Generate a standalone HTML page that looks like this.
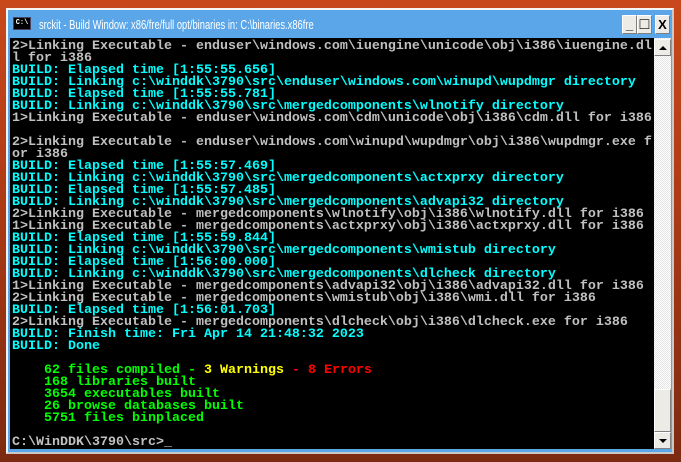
<!DOCTYPE html>
<html><head><style>
html,body{margin:0;padding:0;width:681px;height:462px;overflow:hidden;}
body{background:linear-gradient(180deg,#c8481c 0%,#b03c16 40%,#7c2a12 100%);position:relative;}
.frame{position:absolute;left:6px;top:8px;width:668px;height:446px;background:#5aa6e8;border:2px solid #f4f4f4;box-sizing:border-box;border-bottom-color:#c8c8c8;border-right-color:#c8c8c8;}
.title{position:absolute;left:10px;top:11px;width:662px;height:26px;background:#5aa6e8;}
.title .t{position:absolute;left:29px;top:6px;font:13px "Liberation Sans",sans-serif;color:#fff;white-space:nowrap;transform:scaleX(0.72);transform-origin:0 0;}
.ico{position:absolute;left:3px;top:6px;width:18px;height:13px;background:#000;border:1px solid #446;box-sizing:border-box;color:#fff;font:bold 7px "Liberation Mono",monospace;line-height:11px;text-align:center;}
.btn{position:absolute;top:4px;width:15px;height:19px;background:#ecebe6;border:1px solid;border-color:#fff #808080 #808080 #fff;box-sizing:border-box;font:bold 13px "Liberation Sans",sans-serif;text-align:center;line-height:18px;color:#000;}
.con{position:absolute;left:10px;top:38px;width:644px;height:411px;background:#000;}
pre{margin:0;position:absolute;left:2px;top:3px;font:bold 13.33px/12px "Liberation Mono",monospace;color:#c0c0c0;white-space:pre;}
.c{color:#00ffff}.g{color:#00ff00}.y{color:#ffff00}.r{color:#ff0000}
.sb{position:absolute;left:654px;top:38px;width:17px;height:411px;background:repeating-conic-gradient(#fff 0 25%,#e4e4e4 0 50%) 0 0/2px 2px;}
.sbb{position:absolute;left:0;width:17px;height:17px;background:#ecebe6;border:1px solid;border-color:#fff #808080 #808080 #fff;box-sizing:border-box;}
.tri{position:absolute;left:4px;width:0;height:0;border-left:4px solid transparent;border-right:4px solid transparent;}
</style></head><body>
<div class="frame"></div>
<div class="title"><div class="ico">C:\</div><div class="t">srckit - Build Window: x86/fre/full opt/binaries in: C:\binaries.x86fre</div>
<div class="btn" style="left:612px">_</div><div class="btn" style="left:627px;font-size:16px;line-height:17px">□</div><div class="btn" style="left:645px">X</div></div>
<div class="con"><pre>2&gt;Linking Executable - enduser\windows.com\iuengine\unicode\obj\i386\iuengine.dl
l for i386
<span class="c">BUILD: Elapsed time [1:55:55.656]
BUILD: Linking c:\winddk\3790\src\enduser\windows.com\winupd\wupdmgr directory
BUILD: Elapsed time [1:55:55.781]
BUILD: Linking c:\winddk\3790\src\mergedcomponents\wlnotify directory</span>
1&gt;Linking Executable - enduser\windows.com\cdm\unicode\obj\i386\cdm.dll for i386

2&gt;Linking Executable - enduser\windows.com\winupd\wupdmgr\obj\i386\wupdmgr.exe f
or i386
<span class="c">BUILD: Elapsed time [1:55:57.469]
BUILD: Linking c:\winddk\3790\src\mergedcomponents\actxprxy directory
BUILD: Elapsed time [1:55:57.485]
BUILD: Linking c:\winddk\3790\src\mergedcomponents\advapi32 directory</span>
2&gt;Linking Executable - mergedcomponents\wlnotify\obj\i386\wlnotify.dll for i386
1&gt;Linking Executable - mergedcomponents\actxprxy\obj\i386\actxprxy.dll for i386
<span class="c">BUILD: Elapsed time [1:55:59.844]
BUILD: Linking c:\winddk\3790\src\mergedcomponents\wmistub directory
BUILD: Elapsed time [1:56:00.000]
BUILD: Linking c:\winddk\3790\src\mergedcomponents\dlcheck directory</span>
1&gt;Linking Executable - mergedcomponents\advapi32\obj\i386\advapi32.dll for i386
2&gt;Linking Executable - mergedcomponents\wmistub\obj\i386\wmi.dll for i386
<span class="c">BUILD: Elapsed time [1:56:01.703]</span>
2&gt;Linking Executable - mergedcomponents\dlcheck\obj\i386\dlcheck.exe for i386
<span class="c">BUILD: Finish time: Fri Apr 14 21:48:32 2023
BUILD: Done</span>

<span class="g">    62 files compiled - </span><span class="y">3 Warnings</span><span class="r"> - 8 Errors</span>
<span class="g">    168 libraries built
    3654 executables built
    26 browse databases built
    5751 files binplaced</span>

C:\WinDDK\3790\src&gt;_</pre></div>
<div class="sb">
<div class="sbb" style="top:1px"><div class="tri" style="top:6px;border-bottom:4px solid #000"></div></div>
<div class="sbb" style="top:351px;height:43px"></div>
<div class="sbb" style="top:394px"><div class="tri" style="top:6px;border-top:4px solid #000"></div></div>
</div>
</body></html>
